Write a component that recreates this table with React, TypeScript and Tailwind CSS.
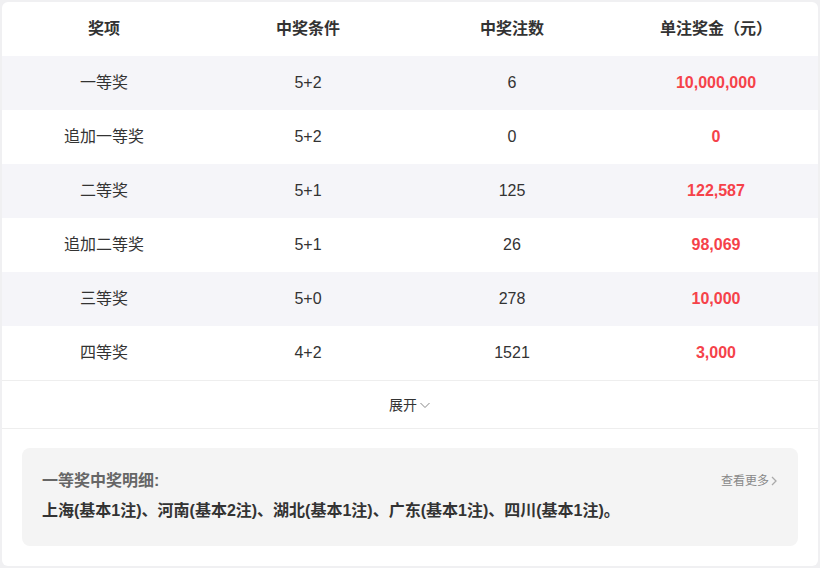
import React from "react";

const rows = [
  { name: "一等奖", cond: "5+2", count: "6", prize: "10,000,000" },
  { name: "追加一等奖", cond: "5+2", count: "0", prize: "0" },
  { name: "二等奖", cond: "5+1", count: "125", prize: "122,587" },
  { name: "追加二等奖", cond: "5+1", count: "26", prize: "98,069" },
  { name: "三等奖", cond: "5+0", count: "278", prize: "10,000" },
  { name: "四等奖", cond: "4+2", count: "1521", prize: "3,000" },
];

const App = () => {
  return (
    <div
      className="h-[568px] w-[820px] bg-[#f0f0f2] p-[2px]"
      style={{ fontFamily: '"Liberation Sans", "Noto Sans CJK SC", sans-serif' }}
    >
      <div className="flex h-full flex-col rounded-md bg-white">
        {/* Header */}
        <div className="grid h-[54px] grid-cols-4 items-center text-center text-base font-bold text-[#333]">
          <div>奖项</div>
          <div>中奖条件</div>
          <div>中奖注数</div>
          <div>单注奖金（元）</div>
        </div>

        {/* Rows */}
        {rows.map((row, index) => (
          <div
            key={index}
            className={`grid h-[54px] grid-cols-4 items-center text-center text-base text-[#333] ${
              index % 2 === 0 ? "bg-[#f5f5f9]" : "bg-white"
            }`}
          >
            <div>{row.name}</div>
            <div>{row.cond}</div>
            <div>{row.count}</div>
            <div className="font-bold text-[#f5424a]">{row.prize}</div>
          </div>
        ))}

        {/* Expand */}
        <div className="flex h-[49px] items-center justify-center border-y border-[#eeeeee] text-sm text-[#333]">
          <span>展开</span>
          <svg className="ml-[2px] mt-[1px] h-3 w-3 text-[#888]" viewBox="0 0 12 12" fill="none" stroke="currentColor" strokeWidth={1}>
            <path d="M1.5 4l4.5 4.5L10.5 4" />
          </svg>
        </div>

        {/* Detail */}
        <div className="px-5 pt-[19px]">
          <div className="rounded-lg bg-[#f4f4f4] px-5 pb-6 pt-[22px]">
            <div className="flex items-center justify-between">
              <div className="text-base font-bold leading-[22px] text-[#666]">一等奖中奖明细:</div>
              <div className="flex items-center text-xs text-[#888]">
                查看更多
                <svg className="ml-[1px] h-3 w-2 text-[#aaa]" viewBox="0 0 8 12" fill="none" stroke="currentColor" strokeWidth={1.3}>
                  <path d="M2 2l4 4-4 4" />
                </svg>
              </div>
            </div>
            <div className="mt-2 text-base font-bold leading-[22px] text-[#333]">
              上海(基本1注)、河南(基本2注)、湖北(基本1注)、广东(基本1注)、四川(基本1注)。
            </div>
          </div>
        </div>
      </div>
    </div>
  );
};

export default App;
